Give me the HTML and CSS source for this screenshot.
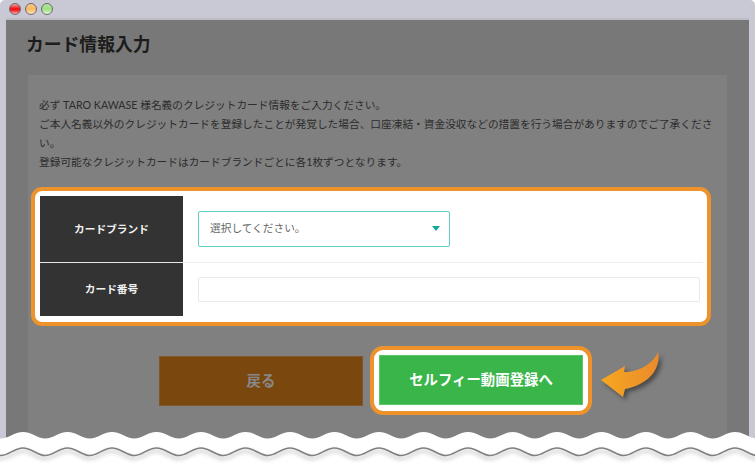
FILE: index.html
```html
<!DOCTYPE html>
<html lang="ja">
<head>
<meta charset="utf-8">
<title>カード情報入力</title>
<link rel="stylesheet" href="styles.css">
</head>
<body>
<div class="window">
  <div class="titlebar">
    <span class="dot dot-red"></span>
    <span class="dot dot-yellow"></span>
    <span class="dot dot-green"></span>
  </div>
  <main class="main">
    <h1 class="title">カード情報入力</h1>
    <section class="panel">
      <div class="intro">
        <p>必ず TARO KAWASE 様名義のクレジットカード情報をご入力ください。</p>
        <p>ご本人名義以外のクレジットカードを登録したことが発覚した場合、口座凍結・資金没収などの措置を行う場合がありますのでご了承ください。</p>
        <p>登録可能なクレジットカードはカードブランドごとに各1枚ずつとなります。</p>
      </div>
      <div class="spot-table">
        <div class="row row-brand">
          <div class="label">カードブランド</div>
          <div class="field">
            <div class="select"><span>選択してください。</span><i class="caret"></i></div>
          </div>
        </div>
        <div class="row row-number">
          <div class="label">カード番号</div>
          <div class="field"><input class="input" type="text" aria-label="カード番号"></div>
        </div>
      </div>
      <div class="actions">
        <a class="btn btn-back">戻る</a>
        <div class="spot-btn"><a class="btn btn-next">セルフィー動画登録へ</a></div>
        <svg class="arrow" width="70" height="56" viewBox="0 0 70 56" aria-hidden="true">
          <defs>
            <linearGradient id="arrowFill" x1="0" y1="0" x2="1" y2="0">
              <stop offset="0" stop-color="#f6a821"/>
              <stop offset="1" stop-color="#ea8a2c"/>
            </linearGradient>
          </defs>
          <path d="M3 33 L27 19 L26 25 C41 25 55 17 60 5 C63 21 52 37 27 42 L25 50 Z" fill="url(#arrowFill)"/>
        </svg>
      </div>
    </section>
  </main>
  <svg class="wave" width="755" height="39" viewBox="0 0 755 39" aria-hidden="true">
    <path fill="#fff" d="M-43.75 13.500c8 0 13.500-6.500 22.250-6.500s14.500 6.500 22.250 6.500c8 0 13.500-6.500 22.250-6.500s14.500 6.500 22.250 6.500c8 0 13.500-6.500 22.250-6.500s14.500 6.500 22.250 6.500c8 0 13.500-6.500 22.250-6.500s14.500 6.500 22.250 6.500c8 0 13.500-6.500 22.250-6.500s14.500 6.500 22.250 6.500c8 0 13.500-6.500 22.250-6.500s14.500 6.500 22.250 6.500c8 0 13.500-6.500 22.250-6.500s14.500 6.500 22.250 6.500c8 0 13.500-6.500 22.250-6.500s14.500 6.500 22.250 6.500c8 0 13.500-6.500 22.250-6.500s14.500 6.500 22.250 6.500c8 0 13.500-6.500 22.250-6.500s14.500 6.500 22.250 6.500c8 0 13.500-6.500 22.250-6.500s14.500 6.500 22.250 6.500c8 0 13.500-6.500 22.250-6.500s14.500 6.500 22.250 6.500c8 0 13.500-6.500 22.250-6.500s14.500 6.500 22.250 6.500c8 0 13.500-6.500 22.250-6.500s14.500 6.500 22.250 6.500c8 0 13.500-6.500 22.250-6.500s14.500 6.500 22.250 6.500c8 0 13.500-6.500 22.250-6.500s14.500 6.500 22.250 6.500c8 0 13.500-6.500 22.250-6.500s14.500 6.500 22.250 6.500c8 0 13.500-6.500 22.250-6.500s14.500 6.500 22.250 6.500V39H-43.75Z"/>
    <path class="wave-line" fill="none" d="M-43.75 30.500c8 0 13.500-7.500 22.250-7.500s14.500 7.500 22.250 7.500c8 0 13.500-7.500 22.250-7.500s14.500 7.500 22.250 7.500c8 0 13.500-7.500 22.250-7.500s14.500 7.500 22.250 7.500c8 0 13.500-7.500 22.250-7.500s14.500 7.500 22.250 7.500c8 0 13.500-7.500 22.250-7.500s14.500 7.500 22.250 7.500c8 0 13.500-7.500 22.250-7.500s14.500 7.500 22.250 7.500c8 0 13.500-7.500 22.250-7.500s14.500 7.500 22.250 7.500c8 0 13.500-7.500 22.250-7.500s14.500 7.500 22.250 7.500c8 0 13.500-7.500 22.250-7.500s14.500 7.500 22.250 7.500c8 0 13.500-7.500 22.250-7.500s14.500 7.500 22.250 7.500c8 0 13.500-7.500 22.250-7.500s14.500 7.500 22.250 7.500c8 0 13.500-7.500 22.250-7.500s14.500 7.500 22.250 7.500c8 0 13.500-7.500 22.250-7.500s14.500 7.500 22.250 7.500c8 0 13.500-7.500 22.250-7.500s14.500 7.500 22.250 7.500c8 0 13.500-7.500 22.250-7.500s14.500 7.500 22.250 7.500c8 0 13.500-7.500 22.250-7.500s14.500 7.500 22.250 7.500c8 0 13.500-7.500 22.250-7.500s14.500 7.500 22.250 7.500c8 0 13.500-7.500 22.250-7.500s14.500 7.500 22.250 7.500"/>
  </svg>
</div>
</body>
</html>
```
FILE: styles.css
```css
* { box-sizing: border-box; }
html, body { margin: 0; padding: 0; }
body {
  width: 755px;
  height: 464px;
  overflow: hidden;
  background: #fff;
  font-family: "Lato", "Noto Sans CJK JP", sans-serif;
}
.window {
  position: relative;
  width: 755px;
  height: 464px;
  padding: 0 6px;
  background: #c9c9d6;
  border-radius: 5px 5px 0 0;
  overflow: hidden;
  display: flex;
  flex-direction: column;
}
.titlebar {
  height: 20px;
  flex: none;
  display: flex;
  align-items: center;
  gap: 4px;
  padding: 0 0 1px 3px;
  border-bottom: 2px solid #bcbcc4;
}
.dot {
  width: 12px;
  height: 12px;
  border-radius: 50%;
  border: 1px solid #6a6a72;
}
.dot-red { background: linear-gradient(#f4a0a0 0, #f01818 45%, #f01818 60%, #f6b0b0 100%); }
.dot-yellow { background: linear-gradient(#f9c88a 0, #f8b860 50%, #fde2bc 100%); }
.dot-green { background: linear-gradient(#b6e6a0 0, #9ee080 50%, #e0f6d4 100%); }
.main {
  flex: 1;
  background: #787878;
  padding: 0 22px;
  display: flex;
  flex-direction: column;
}
.title {
  margin: 0 0 0 -2px;
  height: 55px;
  padding-top: 11px;
  font-size: 17.8px;
  line-height: 27px;
  font-weight: 700;
  color: #1c1c1c;
}
.panel {
  flex: 1;
  background: #808080;
  padding: 20px 11px 0 11px;
}
.intro { width: 680px; height: 92px; }
.intro p {
  margin: 0;
  font-size: 10.7px;
  line-height: 19px;
  color: #2c2c2c;
}
.spot-table {
  width: 680px;
  height: 139px;
  margin-left: -8px;
  background: #fff;
  border: 4px solid #ee922c;
  border-radius: 11px;
  padding: 5px 4px 6px 5px;
  display: flex;
  flex-direction: column;
}
.row { display: flex; }
.row-brand { height: 67px; border-bottom: 1px solid #eee; }
.row-number { height: 53px; }
.label {
  width: 143px;
  flex: none;
  background: #333;
  color: #f0f0f0;
  font-size: 10.7px;
  font-weight: 700;
  padding-bottom: 2px;
  display: flex;
  align-items: center;
  justify-content: center;
}
.row-brand .label { border-bottom: 1px solid #e8e8e8; margin-bottom: -1px; }
.field {
  flex: 1;
  display: flex;
  align-items: center;
  padding: 0 3px 0 15px;
}
.row-brand .field { padding-bottom: 1px; }
.select {
  width: 252px;
  height: 36px;
  border: 1px solid #5ccfc4;
  border-radius: 2px;
  padding: 0 9px 2px 11px;
  display: flex;
  align-items: center;
  justify-content: space-between;
  font-size: 10.7px;
  color: #666;
}
.caret {
  width: 0;
  height: 0;
  margin-top: 2px;
  border-left: 4.5px solid transparent;
  border-right: 4.5px solid transparent;
  border-top: 5px solid #12a99b;
}
.input {
  width: 100%;
  height: 25px;
  border: 1px solid #e9e9e9;
  border-radius: 2px;
  background: #fff;
  padding: 0;
}
.actions {
  position: relative;
  display: flex;
  align-items: center;
  gap: 7px;
  margin-top: 20px;
  padding-left: 120px;
}
.btn {
  display: flex;
  align-items: center;
  justify-content: center;
  height: 50px;
  padding-bottom: 3px;
  font-weight: 700;
  font-size: 14.4px;
}
.btn-back {
  width: 204px;
  background: #7a480f;
  color: #888;
  border: 1px solid #80562a;
}
.spot-btn {
  width: 222px;
  height: 69px;
  border: 4px solid #ee922c;
  border-radius: 13px;
  background: #fff;
  padding: 5px 5px;
}
.btn-next {
  width: 100%;
  background: #39b54a;
  color: #fff;
  border: 1px solid #5cc468;
}
.arrow {
  position: absolute;
  left: 559px;
  top: 1px;
  filter: drop-shadow(3px 3px 2px rgba(30, 30, 30, .55));
}
.wave {
  position: absolute;
  left: 0;
  bottom: 0;
}
.wave-line {
  stroke: #808080;
  stroke-width: 1.6;
  filter: drop-shadow(0 3px 2px rgba(0, 0, 0, .35));
}
```
